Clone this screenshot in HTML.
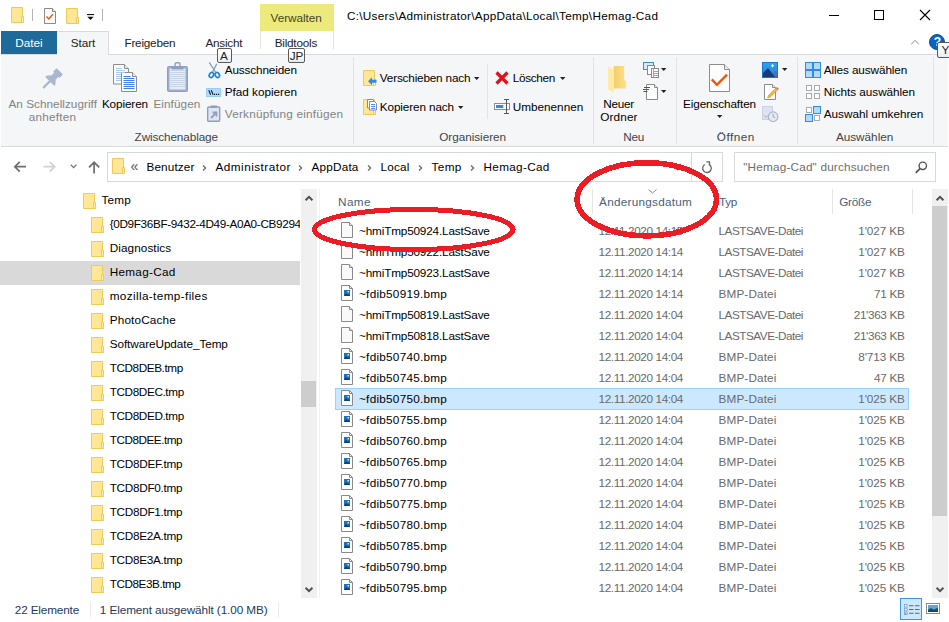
<!DOCTYPE html>
<html><head><meta charset="utf-8"><title>Hemag-Cad</title>
<style>
html,body{margin:0;padding:0;background:#fff;}
body{width:949px;height:622px;position:relative;overflow:hidden;font-family:"Liberation Sans",sans-serif;}
.t{position:absolute;white-space:nowrap;line-height:16px;font-size:12px;}
.r{position:absolute;display:block;}
</style></head><body>
<div class="r" style="left:0px;top:0px;width:949px;height:622px;background:#fff;"></div>
<div class="r" style="left:1px;top:55px;width:947px;height:92px;background:#f5f6f7;"></div>
<div class="r" style="left:1px;top:146px;width:947px;height:1px;background:#dadbdc;"></div>
<div class="r" style="left:1px;top:54px;width:947px;height:1px;background:#dadbdc;"></div>
<div class="r" style="left:260px;top:4px;width:74px;height:27px;background:#ecea7c;"></div>
<span class="t" style="left:270.50px;top:9.50px;font-size:11.75px;color:#45451f;letter-spacing:-0.025px;">Verwalten</span>
<div class="r" style="left:1px;top:31px;width:56px;height:23px;background:#1e6b9b;"></div>
<span class="t" style="left:15.30px;top:35.00px;font-size:11.75px;color:#fff;letter-spacing:-0.057px;">Datei</span>
<div class="r" style="left:57px;top:31px;width:52px;height:24px;background:#f5f6f7;border:1px solid #dadbdc;box-sizing:border-box;border-bottom:none;border-left:none;"></div>
<span class="t" style="left:70.80px;top:35.00px;font-size:11.75px;color:#222;letter-spacing:-0.078px;">Start</span>
<span class="t" style="left:124.43px;top:35.00px;font-size:11.75px;color:#222;letter-spacing:-0.220px;">Freigeben</span>
<span class="t" style="left:205.39px;top:35.00px;font-size:11.75px;color:#222;letter-spacing:-0.220px;">Ansicht</span>
<span class="t" style="left:274.67px;top:35.00px;font-size:11.75px;color:#222;letter-spacing:-0.220px;">Bildtools</span>
<div class="r" style="left:260px;top:31px;width:1px;height:18px;background:#e4e4dc;"></div>
<div class="r" style="left:333px;top:31px;width:1px;height:18px;background:#e4e4dc;"></div>
<span class="t" style="left:347.00px;top:8.00px;font-size:11.75px;color:#000;letter-spacing:0.276px;">C:\Users\Administrator\AppData\Local\Temp\Hemag-Cad</span>
<svg class="r" style="left:11px;top:7px" width="13" height="16" viewBox="0 0 13 16"><path d="M0.5 0.5h11v15H0.5z" fill="#ffe796" stroke="#f1c95a" stroke-width="1"/><path d="M10.5 9.5h2v6h-2z" fill="#ffefb8" stroke="#f1c95a" stroke-width="1"/></svg>
<div class="r" style="left:32px;top:9px;width:1px;height:12px;background:#b5b5b5;"></div>
<svg class="r" style="left:44px;top:8px" width="12" height="16" viewBox="0 0 12 16"><path d="M0.500 0.500h8l3 3v12h-11z" fill="#fafafa" stroke="#8a8a8a"/><path d="M8.500 0.500v3h3" fill="#eee" stroke="#8a8a8a"/><path d="M2.500 8.500l2.300 2.500 4-4.800" fill="none" stroke="#f0560a" stroke-width="1.400"/></svg>
<svg class="r" style="left:66px;top:8px" width="13" height="16" viewBox="0 0 13 16"><path d="M0.5 0.5h11v15H0.5z" fill="#ffe796" stroke="#f1c95a" stroke-width="1"/><path d="M10.5 9.5h2v6h-2z" fill="#ffefb8" stroke="#f1c95a" stroke-width="1"/></svg>
<svg class="r" style="left:87px;top:14px" width="8" height="7" viewBox="0 0 8 7"><rect x="0" y="0" width="7" height="1.100" fill="#111"/><path d="M0.300 2.800h6.400l-3.200 3.200z" fill="#111"/></svg>
<div class="r" style="left:102px;top:9px;width:1px;height:12px;background:#b5b5b5;"></div>
<div class="r" style="left:829px;top:15px;width:10px;height:1px;background:#000;"></div>
<div class="r" style="left:874px;top:10px;width:10px;height:10px;border:1px solid #000;box-sizing:border-box;"></div>
<svg class="r" style="left:919px;top:9px" width="12" height="12" viewBox="0 0 12 12"><path d="M1 1l10 10M11 1l-10 10" stroke="#000" stroke-width="1.1" fill="none"/></svg>
<svg class="r" style="left:910px;top:39px" width="11" height="7" viewBox="0 0 11 7"><path d="M1.200 5.300l3.800-4 3.800 4" stroke="#8a8a8a" stroke-width="1" fill="none"/></svg>
<div class="r" style="left:929px;top:33.8px;width:15.9px;height:15.9px;background:#0b64c2;border:1px solid #0a4f96;box-sizing:border-box;border-radius:8px;"></div>
<span class="t" style="left:933.66px;top:33.70px;font-size:12px;color:#fff;letter-spacing:0.000px;font-weight:bold;">?</span>
<div class="r" style="left:216.5px;top:48px;width:15px;height:15px;background:linear-gradient(#ffffff 30%,#e4ecf8);border:1px solid #5a5a5a;box-sizing:border-box;border-radius:2px;"></div>
<span class="t" style="left:220.08px;top:47.50px;font-size:11.75px;color:#222;letter-spacing:0.000px;">A</span>
<div class="r" style="left:288.3px;top:48px;width:16.5px;height:15px;background:linear-gradient(#ffffff 30%,#e4ecf8);border:1px solid #5a5a5a;box-sizing:border-box;border-radius:2px;"></div>
<span class="t" style="left:289.69px;top:47.50px;font-size:11.75px;color:#222;letter-spacing:0.000px;">JP</span>
<div class="r" style="left:937.3px;top:42.4px;width:16px;height:16.1px;background:linear-gradient(#ffffff 30%,#e4ecf8);border:1px solid #5a5a5a;box-sizing:border-box;border-radius:2px;"></div>
<span class="t" style="left:941.38px;top:42.45px;font-size:11.75px;color:#222;letter-spacing:0.000px;">Y</span>
<svg class="r" style="left:41px;top:66px" width="24" height="24" viewBox="0 0 24 24"><path d="M13.1 19.3 L14.0 18.5 L14.2 13.6 L17.2 10.6 L18.6 11.3 L21.4 8.5 L15.6 2.7 L12.8 5.5 L13.5 6.9 L10.5 9.9 L5.6 10.1 L4.8 11.0z" fill="#a9b8d0" stroke="#a9b8d0" stroke-linejoin="round" stroke-width="1.000"/><path d="M9 15.100l-6.300 6.300" stroke="#a9b8d0" stroke-width="2.200" stroke-linecap="round" fill="none"/></svg>
<span class="t" style="left:8.50px;top:95.60px;font-size:11.75px;color:#838383;letter-spacing:0.028px;">An Schnellzugriff</span>
<span class="t" style="left:28.80px;top:108.80px;font-size:11.75px;color:#838383;letter-spacing:0.209px;">anheften</span>
<svg class="r" style="left:113px;top:64px" width="24" height="28" viewBox="0 0 24 28"><g fill="#fff" stroke="#8c8c8c"><path d="M0.500 0.500h11l4 4v15.500h-15z"/><path d="M11.500 0.500v4h4" fill="#f0f0f0"/><path d="M8.500 8.500h11l4 4v15h-15z"/><path d="M19.500 8.500v4h4" fill="#f0f0f0"/></g><path d="M3 4.5h6M3 6.5h9M3 8.5h9M3 10.5h5M3 12.5h5M3 14.5h5M3 16.5h5" stroke="#a9c9f2" fill="none"/><path d="M10.5 12.5h7M10.5 14.5h11M10.5 16.5h11M10.5 18.5h11M10.5 20.5h11M10.5 22.5h11M10.5 24.5h11" stroke="#3b82e6" fill="none"/></svg>
<span class="t" style="left:101.90px;top:95.60px;font-size:11.75px;color:#000;letter-spacing:-0.119px;">Kopieren</span>
<svg class="r" style="left:167px;top:62px" width="21" height="30" viewBox="0 0 21 30"><rect x="0.500" y="4.500" width="20" height="25" rx="1" fill="#9dadc9" stroke="#8fa0bf"/><rect x="2.500" y="6.500" width="16" height="21" fill="#e6ecf6"/><path d="M3 8.5h15M3 10.5h15M3 12.5h15M3 14.5h15M3 16.5h15M3 18.5h15M3 20.5h15M3 22.5h15M3 24.5h15" stroke="#c9d4e8" fill="none"/><path d="M4.500 7.500v-2l2-1.500h8l2 1.500v2z" fill="#8fa0bf"/><rect x="8" y="0.800" width="5" height="4" rx="1.500" fill="none" stroke="#8fa0bf" stroke-width="1.400"/></svg>
<span class="t" style="left:153.40px;top:95.60px;font-size:11.75px;color:#838383;letter-spacing:0.074px;">Einfügen</span>
<svg class="r" style="left:207px;top:61px" width="15" height="18" viewBox="0 0 15 18"><path d="M2.200 1.400l6.300 9.600M9.800 2.800l-4.200 8.200" stroke="#8d99ab" stroke-width="1.300" fill="none"/><ellipse cx="4.400" cy="14" rx="2" ry="2.700" transform="rotate(30 4.400 14)" fill="none" stroke="#1e88d8" stroke-width="1.700"/><ellipse cx="10.300" cy="14" rx="2" ry="2.700" transform="rotate(-30 10.300 14)" fill="none" stroke="#1e88d8" stroke-width="1.700"/></svg>
<span class="t" style="left:224.80px;top:62.00px;font-size:11.75px;color:#000;letter-spacing:-0.147px;">Ausschneiden</span>
<svg class="r" style="left:206px;top:88px" width="15" height="9" viewBox="0 0 15 9"><rect x="0.500" y="0.500" width="14" height="8" fill="#b4dafb" stroke="#9accf8"/><path d="M2.800 2.200l1.800 4.600M5.300 2.200l1.800 4.600" stroke="#1a1a2a" stroke-width="1.100"/><path d="M8 6.300h1.200M10 6.300h1.200M12 6.300h1.200" stroke="#1a1a2a" stroke-width="1.200"/></svg>
<span class="t" style="left:224.80px;top:84.00px;font-size:11.75px;color:#000;letter-spacing:-0.025px;">Pfad kopieren</span>
<svg class="r" style="left:207px;top:105px" width="14" height="17" viewBox="0 0 14 17"><rect x="0.700" y="2" width="12" height="14.300" rx="1" fill="#dfe6f2" stroke="#8fa0bf" stroke-width="1.400"/><rect x="3.500" y="0.500" width="6.500" height="2.500" fill="#8fa0bf"/><path d="M4 13l4.500-4.500M5.500 7.500h4v4" stroke="#8fa0bf" stroke-width="1.800" fill="none"/></svg>
<span class="t" style="left:224.80px;top:106.00px;font-size:11.75px;color:#838383;letter-spacing:0.209px;">Verknüpfung einfügen</span>
<span class="t" style="left:134.60px;top:129.00px;font-size:11.75px;color:#444;letter-spacing:-0.116px;">Zwischenablage</span>
<div class="r" style="left:353px;top:57px;width:1px;height:87px;background:#e2e3e4;"></div>
<svg class="r" style="left:363px;top:70px" width="13" height="16" viewBox="0 0 13 16"><path d="M0.5 0.5h11v15H0.5z" fill="#ffe796" stroke="#f1c95a" stroke-width="1"/><path d="M10.5 9.5h2v6h-2z" fill="#ffefb8" stroke="#f1c95a" stroke-width="1"/></svg>
<svg class="r" style="left:367px;top:77px" width="10" height="8" viewBox="0 0 10 8"><path d="M9.500 2.700h-4.500v-2.400l-4 3.900 4 3.900v-2.400h4.500z" fill="#2f8be6"/></svg>
<span class="t" style="left:379.80px;top:70.00px;font-size:11.75px;color:#000;letter-spacing:-0.181px;">Verschieben nach</span>
<svg class="r" style="left:473.5px;top:76.5px" width="6" height="4" viewBox="0 0 6 4"><path d="M0 0h5.400l-2.700 3z" fill="#222"/></svg>
<svg class="r" style="left:363px;top:99px" width="13" height="16" viewBox="0 0 13 16"><path d="M0.5 0.5h11v15H0.5z" fill="#ffe796" stroke="#f1c95a" stroke-width="1"/><path d="M10.5 9.5h2v6h-2z" fill="#ffefb8" stroke="#f1c95a" stroke-width="1"/></svg>
<svg class="r" style="left:367px;top:99px" width="11" height="12" viewBox="0 0 11 12"><path d="M0.500 0.500h5l2 2v6.500h-7z" fill="#fff" stroke="#8c8c8c"/><path d="M2.500 2.500h5l2 2v6.500h-7z" fill="#fff" stroke="#8c8c8c"/><path d="M4 5.500h4M4 7.500h4M4 9.500h4" stroke="#4a8ff0"/></svg>
<span class="t" style="left:379.80px;top:99.00px;font-size:11.75px;color:#000;letter-spacing:-0.123px;">Kopieren nach</span>
<svg class="r" style="left:457.7px;top:105.5px" width="6" height="4" viewBox="0 0 6 4"><path d="M0 0h5.400l-2.700 3z" fill="#222"/></svg>
<svg class="r" style="left:495px;top:71px" width="14" height="14" viewBox="0 0 14 14"><path d="M1.500 1.500l11 11M12.500 1.500l-11 11" stroke="#e0101c" stroke-width="3.200" fill="none"/></svg>
<span class="t" style="left:512.80px;top:70.00px;font-size:11.75px;color:#000;letter-spacing:-0.320px;">Löschen</span>
<svg class="r" style="left:559.7px;top:76.5px" width="6" height="4" viewBox="0 0 6 4"><path d="M0 0h5.400l-2.700 3z" fill="#222"/></svg>
<svg class="r" style="left:494px;top:99px" width="16" height="15" viewBox="0 0 16 15"><rect x="0.500" y="4.500" width="15" height="6" fill="#fff" stroke="#8c8c8c"/><rect x="2" y="6" width="7.300" height="3" fill="#2f8be6"/><path d="M12.500 0.500v14M10 0.500h5M10 14.500h5" stroke="#555" fill="none"/></svg>
<span class="t" style="left:512.80px;top:99.00px;font-size:11.75px;color:#000;letter-spacing:-0.016px;">Umbenennen</span>
<span class="t" style="left:439.20px;top:129.00px;font-size:11.75px;color:#444;letter-spacing:-0.033px;">Organisieren</span>
<div class="r" style="left:487px;top:64px;width:1px;height:55px;background:#e2e3e4;"></div>
<div class="r" style="left:593px;top:57px;width:1px;height:87px;background:#e2e3e4;"></div>
<svg class="r" style="left:607px;top:64px" width="21" height="30" viewBox="0 0 21 30"><defs><linearGradient id="nf" x1="0" x2="1"><stop offset="0" stop-color="#f3cf6a"/><stop offset="1" stop-color="#ffe08a"/></linearGradient></defs><path d="M6.600 2h10.600v14l1.900 1.200v7.300h-12.500z" fill="url(#nf)"/><path d="M1.100 2.200l5.500 4.300v22.200l-5.500-3.400z" fill="#ffe9a6"/></svg>
<span class="t" style="left:603.30px;top:95.70px;font-size:11.75px;color:#000;letter-spacing:-0.275px;">Neuer</span>
<span class="t" style="left:600.20px;top:108.70px;font-size:11.75px;color:#000;letter-spacing:0.147px;">Ordner</span>
<svg class="r" style="left:643px;top:62px" width="16" height="16" viewBox="0 0 16 16"><rect x="0.500" y="0.500" width="10" height="7" fill="#d6ebf7" stroke="#3a8fc8"/><rect x="4.500" y="3.500" width="7" height="9" fill="#fff" stroke="#8a8a8a"/><rect x="8.500" y="6.500" width="7" height="9" fill="#fff" stroke="#8a8a8a"/><path d="M11 9.500h4M11 11.500h4M11 13.500h4" stroke="#7aaee8"/><path d="M10.500 7v8" stroke="#e88"/></svg>
<svg class="r" style="left:661px;top:68.2px" width="6" height="4" viewBox="0 0 6 4"><path d="M0 0h5.400l-2.700 3z" fill="#222"/></svg>
<svg class="r" style="left:643px;top:84px" width="16" height="16" viewBox="0 0 16 16"><path d="M3.500 0.500h8l3 3v12h-11z" fill="#fff" stroke="#8a8a8a"/><path d="M11.500 0.500v3h3" fill="#eee" stroke="#8a8a8a"/><path d="M1 3.500h6M0 5.500h6M0.500 7.500h4" stroke="#1e63b0" stroke-width="1"/></svg>
<svg class="r" style="left:661px;top:89.7px" width="6" height="4" viewBox="0 0 6 4"><path d="M0 0h5.400l-2.700 3z" fill="#222"/></svg>
<span class="t" style="left:623.20px;top:128.50px;font-size:11.75px;color:#444;letter-spacing:-0.177px;">Neu</span>
<div class="r" style="left:676px;top:57px;width:1px;height:87px;background:#e2e3e4;"></div>
<svg class="r" style="left:709px;top:64px" width="21" height="28" viewBox="0 0 21 28"><path d="M0.500 0.500h15l5 5v22h-20z" fill="#fdfdfd" stroke="#8c8c8c"/><path d="M15.500 0.500v5h5" fill="#ededed" stroke="#8c8c8c"/><path d="M2.800 15.400l5.100 5.400 10.100-10.200" stroke="#f0560a" stroke-width="2.400" fill="none"/></svg>
<span class="t" style="left:683.00px;top:95.70px;font-size:11.75px;color:#000;letter-spacing:-0.114px;">Eigenschaften</span>
<svg class="r" style="left:716.7px;top:115px" width="6" height="4" viewBox="0 0 6 4"><path d="M0 0h5.400l-2.700 3z" fill="#222"/></svg>
<svg class="r" style="left:762px;top:62px" width="16" height="16" viewBox="0 0 16 16"><defs><linearGradient id="sk" x1="0" x2="0" y1="0" y2="1"><stop offset="0" stop-color="#2aa4ee"/><stop offset="1" stop-color="#2a7fd8"/></linearGradient></defs><rect x="0.500" y="0.500" width="15" height="15" fill="url(#sk)" stroke="#1a74d4"/><path d="M9 15l4-6.500 2 2.500v4z" fill="#4a6cc8"/><path d="M1 15v-4l5-5 7 9z" fill="#173a7c"/><path d="M10.500 2.300v3M9 3.800h3" stroke="#fff" stroke-width="1.100"/></svg>
<svg class="r" style="left:782px;top:68.2px" width="6" height="4" viewBox="0 0 6 4"><path d="M0 0h5.400l-2.700 3z" fill="#222"/></svg>
<svg class="r" style="left:762px;top:84px" width="17" height="16" viewBox="0 0 17 16"><path d="M2.500 0.500h8l3 3v12h-11z" fill="#fff" stroke="#8c8c8c"/><path d="M10.500 0.500v3h3" fill="#eee" stroke="#8c8c8c"/><path d="M5.500 14l1-2.800 7.500-7.200 1.800 1.800-7.500 7.200z" fill="#f3b53c" stroke="#c98a1a" stroke-width="0.500"/><path d="M14 4l1-1 1.800 1.800-1 1z" fill="#e85a6a"/></svg>
<svg class="r" style="left:762px;top:106px" width="17" height="17" viewBox="0 0 17 17"><rect x="0.500" y="0.500" width="10" height="13" fill="#dde3f0" stroke="#c9d2e4"/><circle cx="11.100" cy="10.700" r="4.800" fill="#e4e9f3" stroke="#aab6cf" stroke-width="1.200"/><path d="M11.100 8v2.700l2 1" stroke="#96a4c0" fill="none"/><path d="M2 9l2 2.500 1.500-2" stroke="#aab6cf" fill="none"/></svg>
<span class="t" style="left:716.80px;top:128.50px;font-size:11.75px;color:#444;letter-spacing:0.508px;">Öffnen</span>
<div class="r" style="left:797px;top:57px;width:1px;height:87px;background:#e2e3e4;"></div>
<svg class="r" style="left:805px;top:62px" width="16" height="16" viewBox="0 0 16 16"><rect x="0.5" y="0.5" width="7" height="7" fill="#b4dafb" stroke="#2f8be6"/><rect x="8.5" y="0.5" width="7" height="7" fill="#b4dafb" stroke="#2f8be6"/><rect x="0.5" y="8.5" width="7" height="7" fill="#b4dafb" stroke="#2f8be6"/><rect x="8.5" y="8.5" width="7" height="7" fill="#b4dafb" stroke="#2f8be6"/></svg>
<span class="t" style="left:823.80px;top:62.00px;font-size:11.75px;color:#000;letter-spacing:-0.101px;">Alles auswählen</span>
<svg class="r" style="left:805px;top:84px" width="16" height="16" viewBox="0 0 16 16"><rect x="1.5" y="1.5" width="5" height="5" fill="#fff" stroke="#ababab"/><rect x="9.5" y="1.5" width="5" height="5" fill="#fff" stroke="#ababab"/><rect x="1.5" y="9.5" width="5" height="5" fill="#fff" stroke="#ababab"/><rect x="9.5" y="9.5" width="5" height="5" fill="#fff" stroke="#ababab"/></svg>
<span class="t" style="left:823.80px;top:83.70px;font-size:11.75px;color:#000;letter-spacing:-0.052px;">Nichts auswählen</span>
<svg class="r" style="left:805px;top:106px" width="16" height="16" viewBox="0 0 16 16"><rect x="1.5" y="1.5" width="5" height="5" fill="#fff" stroke="#ababab"/><rect x="8.5" y="0.5" width="7" height="7" fill="#b4dafb" stroke="#2f8be6"/><rect x="0.5" y="8.5" width="7" height="7" fill="#b4dafb" stroke="#2f8be6"/><rect x="9.5" y="9.5" width="5" height="5" fill="#fff" stroke="#ababab"/></svg>
<span class="t" style="left:823.80px;top:105.80px;font-size:11.75px;color:#000;letter-spacing:-0.022px;">Auswahl umkehren</span>
<span class="t" style="left:835.90px;top:129.00px;font-size:11.75px;color:#444;letter-spacing:-0.010px;">Auswählen</span>
<div class="r" style="left:933px;top:57px;width:1px;height:87px;background:#e2e3e4;"></div>
<svg class="r" style="left:13px;top:161px" width="14" height="12" viewBox="0 0 14 12"><path d="M13 5.700h-11M6.700 0.800l-4.900 4.900 4.900 4.900" stroke="#6e6e6e" stroke-width="1.700" fill="none"/></svg>
<svg class="r" style="left:43px;top:161px" width="14" height="12" viewBox="0 0 14 12"><path d="M0.500 5.700h11M6.800 0.800l4.900 4.900-4.900 4.900" stroke="#d2d2d2" stroke-width="1.700" fill="none"/></svg>
<svg class="r" style="left:70px;top:164px" width="8" height="5" viewBox="0 0 8 5"><path d="M0.800 0.800l2.800 2.800 2.800-2.800" stroke="#777" stroke-width="1.300" fill="none"/></svg>
<svg class="r" style="left:88px;top:161px" width="12" height="13" viewBox="0 0 12 13"><path d="M6.100 12.600v-11M1 6.400l5.100-5.100 5.100 5.100" stroke="#6e6e6e" stroke-width="1.700" fill="none"/></svg>
<div class="r" style="left:107px;top:152px;width:616px;height:29.5px;background:#fff;border:1px solid #d9d9d9;box-sizing:border-box;"></div>
<div class="r" style="left:691px;top:153px;width:1px;height:28px;background:#d9d9d9;"></div>
<svg class="r" style="left:112px;top:158px" width="13" height="16" viewBox="0 0 13 16"><path d="M0.5 0.5h11v15H0.5z" fill="#ffe796" stroke="#f1c95a" stroke-width="1"/><path d="M10.5 9.5h2v6h-2z" fill="#ffefb8" stroke="#f1c95a" stroke-width="1"/></svg>
<span class="t" style="left:130.50px;top:158.20px;font-size:14px;color:#555;letter-spacing:0.000px;">«</span>
<span class="t" style="left:146.50px;top:159.00px;font-size:11.75px;color:#000;letter-spacing:0.125px;">Benutzer</span>
<span class="t" style="left:215.50px;top:159.00px;font-size:11.75px;color:#000;letter-spacing:0.474px;">Administrator</span>
<span class="t" style="left:311.50px;top:159.00px;font-size:11.75px;color:#000;letter-spacing:0.196px;">AppData</span>
<span class="t" style="left:380.50px;top:159.00px;font-size:11.75px;color:#000;letter-spacing:0.203px;">Local</span>
<span class="t" style="left:431.50px;top:159.00px;font-size:11.75px;color:#000;letter-spacing:0.390px;">Temp</span>
<span class="t" style="left:483.50px;top:159.00px;font-size:11.75px;color:#000;letter-spacing:0.320px;">Hemag-Cad</span>
<svg class="r" style="left:202px;top:164px" width="5" height="8" viewBox="0 0 5 8"><path d="M1 1.500l2.600 2.500-2.600 2.500" stroke="#6a6a6a" stroke-width="1.300" fill="none"/></svg>
<svg class="r" style="left:298px;top:164px" width="5" height="8" viewBox="0 0 5 8"><path d="M1 1.500l2.600 2.500-2.600 2.500" stroke="#6a6a6a" stroke-width="1.300" fill="none"/></svg>
<svg class="r" style="left:367px;top:164px" width="5" height="8" viewBox="0 0 5 8"><path d="M1 1.500l2.600 2.500-2.600 2.500" stroke="#6a6a6a" stroke-width="1.300" fill="none"/></svg>
<svg class="r" style="left:418px;top:164px" width="5" height="8" viewBox="0 0 5 8"><path d="M1 1.500l2.600 2.500-2.600 2.500" stroke="#6a6a6a" stroke-width="1.300" fill="none"/></svg>
<svg class="r" style="left:470px;top:164px" width="5" height="8" viewBox="0 0 5 8"><path d="M1 1.500l2.600 2.500-2.600 2.500" stroke="#6a6a6a" stroke-width="1.300" fill="none"/></svg>
<svg class="r" style="left:673px;top:165px" width="9" height="6" viewBox="0 0 9 6"><path d="M1 1l3.500 3.500 3.500-3.500" stroke="#444" stroke-width="1.400" fill="none"/></svg>
<svg class="r" style="left:701px;top:161px" width="12" height="13" viewBox="0 0 12 13"><path d="M7.800 3.300a4.300 4.300 0 1 1-4 0.200" stroke="#666" stroke-width="1.300" fill="none"/><path d="M5.300 0.800h3.200v3.200" stroke="#666" stroke-width="1.300" fill="none"/></svg>
<div class="r" style="left:734px;top:152px;width:202px;height:29.5px;background:#fff;border:1px solid #d9d9d9;box-sizing:border-box;"></div>
<span class="t" style="left:743.20px;top:159.30px;font-size:11.75px;color:#6d6d6d;letter-spacing:0.190px;">"Hemag-Cad" durchsuchen</span>
<svg class="r" style="left:915px;top:161px" width="13" height="13" viewBox="0 0 13 13"><circle cx="7.800" cy="4.800" r="3.700" stroke="#555" stroke-width="1.400" fill="none"/><path d="M5.200 7.400l-4.400 4.400" stroke="#555" stroke-width="1.800"/></svg>
<div class="r" style="left:0px;top:261px;width:300px;height:24px;background:#d9d9d9;"></div>
<svg class="r" style="left:83px;top:193px" width="13" height="16" viewBox="0 0 13 16"><path d="M0.5 0.5h11v15H0.5z" fill="#ffe796" stroke="#f1c95a" stroke-width="1"/><path d="M10.5 9.5h2v6h-2z" fill="#ffefb8" stroke="#f1c95a" stroke-width="1"/></svg>
<span class="t" style="left:101.50px;top:192.20px;font-size:11.75px;color:#000;letter-spacing:0.156px;">Temp</span>
<svg class="r" style="left:91px;top:217px" width="13" height="16" viewBox="0 0 13 16"><path d="M0.5 0.5h11v15H0.5z" fill="#ffe796" stroke="#f1c95a" stroke-width="1"/><path d="M10.5 9.5h2v6h-2z" fill="#ffefb8" stroke="#f1c95a" stroke-width="1"/></svg>
<span class="t" style="left:109.70px;top:216.20px;font-size:11.75px;color:#000;letter-spacing:-0.347px;">{0D9F36BF-9432-4D49-A0A0-CB9294</span>
<svg class="r" style="left:91px;top:241px" width="13" height="16" viewBox="0 0 13 16"><path d="M0.5 0.5h11v15H0.5z" fill="#ffe796" stroke="#f1c95a" stroke-width="1"/><path d="M10.5 9.5h2v6h-2z" fill="#ffefb8" stroke="#f1c95a" stroke-width="1"/></svg>
<span class="t" style="left:109.70px;top:240.20px;font-size:11.75px;color:#000;letter-spacing:0.077px;">Diagnostics</span>
<svg class="r" style="left:91px;top:265px" width="13" height="16" viewBox="0 0 13 16"><path d="M0.5 0.5h11v15H0.5z" fill="#ffe796" stroke="#f1c95a" stroke-width="1"/><path d="M10.5 9.5h2v6h-2z" fill="#ffefb8" stroke="#f1c95a" stroke-width="1"/></svg>
<span class="t" style="left:109.70px;top:264.20px;font-size:11.75px;color:#000;letter-spacing:0.282px;">Hemag-Cad</span>
<svg class="r" style="left:91px;top:289px" width="13" height="16" viewBox="0 0 13 16"><path d="M0.5 0.5h11v15H0.5z" fill="#ffe796" stroke="#f1c95a" stroke-width="1"/><path d="M10.5 9.5h2v6h-2z" fill="#ffefb8" stroke="#f1c95a" stroke-width="1"/></svg>
<span class="t" style="left:109.70px;top:288.20px;font-size:11.75px;color:#000;letter-spacing:0.370px;">mozilla-temp-files</span>
<svg class="r" style="left:91px;top:313px" width="13" height="16" viewBox="0 0 13 16"><path d="M0.5 0.5h11v15H0.5z" fill="#ffe796" stroke="#f1c95a" stroke-width="1"/><path d="M10.5 9.5h2v6h-2z" fill="#ffefb8" stroke="#f1c95a" stroke-width="1"/></svg>
<span class="t" style="left:109.70px;top:312.20px;font-size:11.75px;color:#000;letter-spacing:0.159px;">PhotoCache</span>
<svg class="r" style="left:91px;top:337px" width="13" height="16" viewBox="0 0 13 16"><path d="M0.5 0.5h11v15H0.5z" fill="#ffe796" stroke="#f1c95a" stroke-width="1"/><path d="M10.5 9.5h2v6h-2z" fill="#ffefb8" stroke="#f1c95a" stroke-width="1"/></svg>
<span class="t" style="left:109.70px;top:336.20px;font-size:11.75px;color:#000;letter-spacing:-0.073px;">SoftwareUpdate_Temp</span>
<svg class="r" style="left:91px;top:361px" width="13" height="16" viewBox="0 0 13 16"><path d="M0.5 0.5h11v15H0.5z" fill="#ffe796" stroke="#f1c95a" stroke-width="1"/><path d="M10.5 9.5h2v6h-2z" fill="#ffefb8" stroke="#f1c95a" stroke-width="1"/></svg>
<span class="t" style="left:109.70px;top:360.20px;font-size:11.75px;color:#000;letter-spacing:-0.420px;">TCD8DEB.tmp</span>
<svg class="r" style="left:91px;top:385px" width="13" height="16" viewBox="0 0 13 16"><path d="M0.5 0.5h11v15H0.5z" fill="#ffe796" stroke="#f1c95a" stroke-width="1"/><path d="M10.5 9.5h2v6h-2z" fill="#ffefb8" stroke="#f1c95a" stroke-width="1"/></svg>
<span class="t" style="left:109.70px;top:384.20px;font-size:11.75px;color:#000;letter-spacing:-0.384px;">TCD8DEC.tmp</span>
<svg class="r" style="left:91px;top:409px" width="13" height="16" viewBox="0 0 13 16"><path d="M0.5 0.5h11v15H0.5z" fill="#ffe796" stroke="#f1c95a" stroke-width="1"/><path d="M10.5 9.5h2v6h-2z" fill="#ffefb8" stroke="#f1c95a" stroke-width="1"/></svg>
<span class="t" style="left:109.70px;top:408.20px;font-size:11.75px;color:#000;letter-spacing:-0.384px;">TCD8DED.tmp</span>
<svg class="r" style="left:91px;top:433px" width="13" height="16" viewBox="0 0 13 16"><path d="M0.5 0.5h11v15H0.5z" fill="#ffe796" stroke="#f1c95a" stroke-width="1"/><path d="M10.5 9.5h2v6h-2z" fill="#ffefb8" stroke="#f1c95a" stroke-width="1"/></svg>
<span class="t" style="left:109.70px;top:432.20px;font-size:11.75px;color:#000;letter-spacing:-0.480px;">TCD8DEE.tmp</span>
<svg class="r" style="left:91px;top:457px" width="13" height="16" viewBox="0 0 13 16"><path d="M0.5 0.5h11v15H0.5z" fill="#ffe796" stroke="#f1c95a" stroke-width="1"/><path d="M10.5 9.5h2v6h-2z" fill="#ffefb8" stroke="#f1c95a" stroke-width="1"/></svg>
<span class="t" style="left:109.70px;top:456.20px;font-size:11.75px;color:#000;letter-spacing:-0.283px;">TCD8DEF.tmp</span>
<svg class="r" style="left:91px;top:481px" width="13" height="16" viewBox="0 0 13 16"><path d="M0.5 0.5h11v15H0.5z" fill="#ffe796" stroke="#f1c95a" stroke-width="1"/><path d="M10.5 9.5h2v6h-2z" fill="#ffefb8" stroke="#f1c95a" stroke-width="1"/></svg>
<span class="t" style="left:109.70px;top:480.20px;font-size:11.75px;color:#000;letter-spacing:-0.283px;">TCD8DF0.tmp</span>
<svg class="r" style="left:91px;top:505px" width="13" height="16" viewBox="0 0 13 16"><path d="M0.5 0.5h11v15H0.5z" fill="#ffe796" stroke="#f1c95a" stroke-width="1"/><path d="M10.5 9.5h2v6h-2z" fill="#ffefb8" stroke="#f1c95a" stroke-width="1"/></svg>
<span class="t" style="left:109.70px;top:504.20px;font-size:11.75px;color:#000;letter-spacing:-0.283px;">TCD8DF1.tmp</span>
<svg class="r" style="left:91px;top:529px" width="13" height="16" viewBox="0 0 13 16"><path d="M0.5 0.5h11v15H0.5z" fill="#ffe796" stroke="#f1c95a" stroke-width="1"/><path d="M10.5 9.5h2v6h-2z" fill="#ffefb8" stroke="#f1c95a" stroke-width="1"/></svg>
<span class="t" style="left:109.70px;top:528.20px;font-size:11.75px;color:#000;letter-spacing:-0.284px;">TCD8E2A.tmp</span>
<svg class="r" style="left:91px;top:553px" width="13" height="16" viewBox="0 0 13 16"><path d="M0.5 0.5h11v15H0.5z" fill="#ffe796" stroke="#f1c95a" stroke-width="1"/><path d="M10.5 9.5h2v6h-2z" fill="#ffefb8" stroke="#f1c95a" stroke-width="1"/></svg>
<span class="t" style="left:109.70px;top:552.20px;font-size:11.75px;color:#000;letter-spacing:-0.284px;">TCD8E3A.tmp</span>
<svg class="r" style="left:91px;top:577px" width="13" height="16" viewBox="0 0 13 16"><path d="M0.5 0.5h11v15H0.5z" fill="#ffe796" stroke="#f1c95a" stroke-width="1"/><path d="M10.5 9.5h2v6h-2z" fill="#ffefb8" stroke="#f1c95a" stroke-width="1"/></svg>
<span class="t" style="left:109.70px;top:576.20px;font-size:11.75px;color:#000;letter-spacing:-0.454px;">TCD8E3B.tmp</span>
<div class="r" style="left:300px;top:188px;width:20px;height:410px;background:#fff;"></div>
<div class="r" style="left:301px;top:189px;width:16px;height:409px;background:#f0f0f0;"></div>
<svg class="r" style="left:304px;top:194px" width="10" height="8" viewBox="0 0 10 8"><path d="M1.600 6.300l3.400-3.400 3.400 3.400" stroke="#505050" stroke-width="2" fill="none"/></svg>
<svg class="r" style="left:304px;top:586px" width="10" height="8" viewBox="0 0 10 8"><path d="M1.600 1.700l3.400 3.400 3.400-3.400" stroke="#505050" stroke-width="2" fill="none"/></svg>
<div class="r" style="left:301px;top:381px;width:15px;height:25.5px;background:#cdcdcd;"></div>
<div class="r" style="left:319px;top:189px;width:1px;height:409px;background:#f2f2f2;"></div>
<span class="t" style="left:338.10px;top:194.00px;font-size:11.75px;color:#4c607a;letter-spacing:0.353px;">Name</span>
<span class="t" style="left:599.10px;top:194.00px;font-size:11.75px;color:#4c607a;letter-spacing:0.247px;">Änderungsdatum</span>
<span class="t" style="left:719.00px;top:194.00px;font-size:11.75px;color:#4c607a;letter-spacing:-0.270px;">Typ</span>
<span class="t" style="left:839.20px;top:194.00px;font-size:11.75px;color:#4c607a;letter-spacing:-0.225px;">Größe</span>
<div class="r" style="left:592px;top:189px;width:1px;height:25px;background:#e5e5e5;"></div>
<div class="r" style="left:713px;top:189px;width:1px;height:25px;background:#e5e5e5;"></div>
<div class="r" style="left:832px;top:189px;width:1px;height:25px;background:#e5e5e5;"></div>
<div class="r" style="left:912px;top:189px;width:1px;height:25px;background:#e5e5e5;"></div>
<svg class="r" style="left:648px;top:189px" width="9" height="5" viewBox="0 0 9 5"><path d="M0.500 0.500l4 3.500 4-3.500" stroke="#8a8a8a" stroke-width="1" fill="none"/></svg>
<div class="r" style="left:335px;top:388px;width:574px;height:22px;background:#cce8ff;border:1px solid #99d1ff;box-sizing:border-box;"></div>
<svg class="r" style="left:341px;top:222px" width="12" height="16" viewBox="0 0 12 16"><path d="M0.5 0.5h8l3 3v12h-11z" fill="#f9f9f9" stroke="#8a8a8a"/><path d="M8.5 0.5v3h3" fill="#ececec" stroke="#8a8a8a"/></svg>
<span class="t" style="left:359.00px;top:223.00px;font-size:11.75px;color:#000;letter-spacing:-0.166px;">~hmiTmp50924.LastSave</span>
<span class="t" style="left:598.50px;top:223.00px;font-size:11.75px;color:#6a6a6a;letter-spacing:-0.380px;">12.11.2020 14:15</span>
<span class="t" style="left:718.50px;top:223.00px;font-size:11.75px;color:#6a6a6a;letter-spacing:-0.485px;">LASTSAVE-Datei</span>
<span class="t" style="left:858.30px;top:223.00px;font-size:11.75px;color:#6a6a6a;letter-spacing:-0.117px;">1'027 KB</span>
<svg class="r" style="left:341px;top:243px" width="12" height="16" viewBox="0 0 12 16"><path d="M0.5 0.5h8l3 3v12h-11z" fill="#f9f9f9" stroke="#8a8a8a"/><path d="M8.5 0.5v3h3" fill="#ececec" stroke="#8a8a8a"/></svg>
<span class="t" style="left:359.00px;top:244.00px;font-size:11.75px;color:#000;letter-spacing:-0.166px;">~hmiTmp50922.LastSave</span>
<span class="t" style="left:598.50px;top:244.00px;font-size:11.75px;color:#6a6a6a;letter-spacing:-0.380px;">12.11.2020 14:14</span>
<span class="t" style="left:718.50px;top:244.00px;font-size:11.75px;color:#6a6a6a;letter-spacing:-0.485px;">LASTSAVE-Datei</span>
<span class="t" style="left:858.30px;top:244.00px;font-size:11.75px;color:#6a6a6a;letter-spacing:-0.117px;">1'027 KB</span>
<svg class="r" style="left:341px;top:264px" width="12" height="16" viewBox="0 0 12 16"><path d="M0.5 0.5h8l3 3v12h-11z" fill="#f9f9f9" stroke="#8a8a8a"/><path d="M8.5 0.5v3h3" fill="#ececec" stroke="#8a8a8a"/></svg>
<span class="t" style="left:359.00px;top:265.00px;font-size:11.75px;color:#000;letter-spacing:-0.166px;">~hmiTmp50923.LastSave</span>
<span class="t" style="left:598.50px;top:265.00px;font-size:11.75px;color:#6a6a6a;letter-spacing:-0.380px;">12.11.2020 14:14</span>
<span class="t" style="left:718.50px;top:265.00px;font-size:11.75px;color:#6a6a6a;letter-spacing:-0.485px;">LASTSAVE-Datei</span>
<span class="t" style="left:858.30px;top:265.00px;font-size:11.75px;color:#6a6a6a;letter-spacing:-0.117px;">1'027 KB</span>
<svg class="r" style="left:341px;top:285px" width="12" height="16" viewBox="0 0 12 16"><path d="M0.5 0.5h8l3 3v12h-11z" fill="#fff" stroke="#8a8a8a"/><path d="M8.5 0.5v3h3" fill="none" stroke="#8a8a8a"/><rect x="3" y="5" width="6" height="6" fill="#1e73be"/><path d="M3 11l2-3 2 2 1-1 1 2z" fill="#0b3f7a"/><rect x="6.5" y="6" width="1.5" height="1.5" fill="#cfe6fb"/></svg>
<span class="t" style="left:359.00px;top:286.00px;font-size:11.75px;color:#000;letter-spacing:0.254px;">~fdib50919.bmp</span>
<span class="t" style="left:598.50px;top:286.00px;font-size:11.75px;color:#6a6a6a;letter-spacing:-0.380px;">12.11.2020 14:14</span>
<span class="t" style="left:718.50px;top:286.00px;font-size:11.75px;color:#6a6a6a;letter-spacing:0.137px;">BMP-Datei</span>
<span class="t" style="left:874.00px;top:286.00px;font-size:11.75px;color:#6a6a6a;letter-spacing:-0.302px;">71 KB</span>
<svg class="r" style="left:341px;top:306px" width="12" height="16" viewBox="0 0 12 16"><path d="M0.5 0.5h8l3 3v12h-11z" fill="#f9f9f9" stroke="#8a8a8a"/><path d="M8.5 0.5v3h3" fill="#ececec" stroke="#8a8a8a"/></svg>
<span class="t" style="left:359.00px;top:307.00px;font-size:11.75px;color:#000;letter-spacing:-0.166px;">~hmiTmp50819.LastSave</span>
<span class="t" style="left:598.50px;top:307.00px;font-size:11.75px;color:#6a6a6a;letter-spacing:-0.380px;">12.11.2020 14:04</span>
<span class="t" style="left:718.50px;top:307.00px;font-size:11.75px;color:#6a6a6a;letter-spacing:-0.485px;">LASTSAVE-Datei</span>
<span class="t" style="left:853.70px;top:307.00px;font-size:11.75px;color:#6a6a6a;letter-spacing:-0.344px;">21'363 KB</span>
<svg class="r" style="left:341px;top:327px" width="12" height="16" viewBox="0 0 12 16"><path d="M0.5 0.5h8l3 3v12h-11z" fill="#f9f9f9" stroke="#8a8a8a"/><path d="M8.5 0.5v3h3" fill="#ececec" stroke="#8a8a8a"/></svg>
<span class="t" style="left:359.00px;top:328.00px;font-size:11.75px;color:#000;letter-spacing:-0.166px;">~hmiTmp50818.LastSave</span>
<span class="t" style="left:598.50px;top:328.00px;font-size:11.75px;color:#6a6a6a;letter-spacing:-0.380px;">12.11.2020 14:04</span>
<span class="t" style="left:718.50px;top:328.00px;font-size:11.75px;color:#6a6a6a;letter-spacing:-0.485px;">LASTSAVE-Datei</span>
<span class="t" style="left:853.70px;top:328.00px;font-size:11.75px;color:#6a6a6a;letter-spacing:-0.344px;">21'363 KB</span>
<svg class="r" style="left:341px;top:348px" width="12" height="16" viewBox="0 0 12 16"><path d="M0.5 0.5h8l3 3v12h-11z" fill="#fff" stroke="#8a8a8a"/><path d="M8.5 0.5v3h3" fill="none" stroke="#8a8a8a"/><rect x="3" y="5" width="6" height="6" fill="#1e73be"/><path d="M3 11l2-3 2 2 1-1 1 2z" fill="#0b3f7a"/><rect x="6.5" y="6" width="1.5" height="1.5" fill="#cfe6fb"/></svg>
<span class="t" style="left:359.00px;top:349.00px;font-size:11.75px;color:#000;letter-spacing:0.254px;">~fdib50740.bmp</span>
<span class="t" style="left:598.50px;top:349.00px;font-size:11.75px;color:#6a6a6a;letter-spacing:-0.380px;">12.11.2020 14:04</span>
<span class="t" style="left:718.50px;top:349.00px;font-size:11.75px;color:#6a6a6a;letter-spacing:0.137px;">BMP-Datei</span>
<span class="t" style="left:858.30px;top:349.00px;font-size:11.75px;color:#6a6a6a;letter-spacing:-0.117px;">8'713 KB</span>
<svg class="r" style="left:341px;top:369px" width="12" height="16" viewBox="0 0 12 16"><path d="M0.5 0.5h8l3 3v12h-11z" fill="#fff" stroke="#8a8a8a"/><path d="M8.5 0.5v3h3" fill="none" stroke="#8a8a8a"/><rect x="3" y="5" width="6" height="6" fill="#1e73be"/><path d="M3 11l2-3 2 2 1-1 1 2z" fill="#0b3f7a"/><rect x="6.5" y="6" width="1.5" height="1.5" fill="#cfe6fb"/></svg>
<span class="t" style="left:359.00px;top:370.00px;font-size:11.75px;color:#000;letter-spacing:0.254px;">~fdib50745.bmp</span>
<span class="t" style="left:598.50px;top:370.00px;font-size:11.75px;color:#6a6a6a;letter-spacing:-0.380px;">12.11.2020 14:04</span>
<span class="t" style="left:718.50px;top:370.00px;font-size:11.75px;color:#6a6a6a;letter-spacing:0.137px;">BMP-Datei</span>
<span class="t" style="left:874.00px;top:370.00px;font-size:11.75px;color:#6a6a6a;letter-spacing:-0.302px;">47 KB</span>
<svg class="r" style="left:341px;top:390px" width="12" height="16" viewBox="0 0 12 16"><path d="M0.5 0.5h8l3 3v12h-11z" fill="#fff" stroke="#8a8a8a"/><path d="M8.5 0.5v3h3" fill="none" stroke="#8a8a8a"/><rect x="3" y="5" width="6" height="6" fill="#1e73be"/><path d="M3 11l2-3 2 2 1-1 1 2z" fill="#0b3f7a"/><rect x="6.5" y="6" width="1.5" height="1.5" fill="#cfe6fb"/></svg>
<span class="t" style="left:359.00px;top:391.00px;font-size:11.75px;color:#000;letter-spacing:0.254px;">~fdib50750.bmp</span>
<span class="t" style="left:598.50px;top:391.00px;font-size:11.75px;color:#6a6a6a;letter-spacing:-0.380px;">12.11.2020 14:04</span>
<span class="t" style="left:718.50px;top:391.00px;font-size:11.75px;color:#6a6a6a;letter-spacing:0.137px;">BMP-Datei</span>
<span class="t" style="left:858.30px;top:391.00px;font-size:11.75px;color:#6a6a6a;letter-spacing:-0.117px;">1'025 KB</span>
<svg class="r" style="left:341px;top:411px" width="12" height="16" viewBox="0 0 12 16"><path d="M0.5 0.5h8l3 3v12h-11z" fill="#fff" stroke="#8a8a8a"/><path d="M8.5 0.5v3h3" fill="none" stroke="#8a8a8a"/><rect x="3" y="5" width="6" height="6" fill="#1e73be"/><path d="M3 11l2-3 2 2 1-1 1 2z" fill="#0b3f7a"/><rect x="6.5" y="6" width="1.5" height="1.5" fill="#cfe6fb"/></svg>
<span class="t" style="left:359.00px;top:412.00px;font-size:11.75px;color:#000;letter-spacing:0.254px;">~fdib50755.bmp</span>
<span class="t" style="left:598.50px;top:412.00px;font-size:11.75px;color:#6a6a6a;letter-spacing:-0.380px;">12.11.2020 14:04</span>
<span class="t" style="left:718.50px;top:412.00px;font-size:11.75px;color:#6a6a6a;letter-spacing:0.137px;">BMP-Datei</span>
<span class="t" style="left:858.30px;top:412.00px;font-size:11.75px;color:#6a6a6a;letter-spacing:-0.117px;">1'025 KB</span>
<svg class="r" style="left:341px;top:432px" width="12" height="16" viewBox="0 0 12 16"><path d="M0.5 0.5h8l3 3v12h-11z" fill="#fff" stroke="#8a8a8a"/><path d="M8.5 0.5v3h3" fill="none" stroke="#8a8a8a"/><rect x="3" y="5" width="6" height="6" fill="#1e73be"/><path d="M3 11l2-3 2 2 1-1 1 2z" fill="#0b3f7a"/><rect x="6.5" y="6" width="1.5" height="1.5" fill="#cfe6fb"/></svg>
<span class="t" style="left:359.00px;top:433.00px;font-size:11.75px;color:#000;letter-spacing:0.254px;">~fdib50760.bmp</span>
<span class="t" style="left:598.50px;top:433.00px;font-size:11.75px;color:#6a6a6a;letter-spacing:-0.380px;">12.11.2020 14:04</span>
<span class="t" style="left:718.50px;top:433.00px;font-size:11.75px;color:#6a6a6a;letter-spacing:0.137px;">BMP-Datei</span>
<span class="t" style="left:858.30px;top:433.00px;font-size:11.75px;color:#6a6a6a;letter-spacing:-0.117px;">1'025 KB</span>
<svg class="r" style="left:341px;top:453px" width="12" height="16" viewBox="0 0 12 16"><path d="M0.5 0.5h8l3 3v12h-11z" fill="#fff" stroke="#8a8a8a"/><path d="M8.5 0.5v3h3" fill="none" stroke="#8a8a8a"/><rect x="3" y="5" width="6" height="6" fill="#1e73be"/><path d="M3 11l2-3 2 2 1-1 1 2z" fill="#0b3f7a"/><rect x="6.5" y="6" width="1.5" height="1.5" fill="#cfe6fb"/></svg>
<span class="t" style="left:359.00px;top:454.00px;font-size:11.75px;color:#000;letter-spacing:0.254px;">~fdib50765.bmp</span>
<span class="t" style="left:598.50px;top:454.00px;font-size:11.75px;color:#6a6a6a;letter-spacing:-0.380px;">12.11.2020 14:04</span>
<span class="t" style="left:718.50px;top:454.00px;font-size:11.75px;color:#6a6a6a;letter-spacing:0.137px;">BMP-Datei</span>
<span class="t" style="left:858.30px;top:454.00px;font-size:11.75px;color:#6a6a6a;letter-spacing:-0.117px;">1'025 KB</span>
<svg class="r" style="left:341px;top:474px" width="12" height="16" viewBox="0 0 12 16"><path d="M0.5 0.5h8l3 3v12h-11z" fill="#fff" stroke="#8a8a8a"/><path d="M8.5 0.5v3h3" fill="none" stroke="#8a8a8a"/><rect x="3" y="5" width="6" height="6" fill="#1e73be"/><path d="M3 11l2-3 2 2 1-1 1 2z" fill="#0b3f7a"/><rect x="6.5" y="6" width="1.5" height="1.5" fill="#cfe6fb"/></svg>
<span class="t" style="left:359.00px;top:475.00px;font-size:11.75px;color:#000;letter-spacing:0.254px;">~fdib50770.bmp</span>
<span class="t" style="left:598.50px;top:475.00px;font-size:11.75px;color:#6a6a6a;letter-spacing:-0.380px;">12.11.2020 14:04</span>
<span class="t" style="left:718.50px;top:475.00px;font-size:11.75px;color:#6a6a6a;letter-spacing:0.137px;">BMP-Datei</span>
<span class="t" style="left:858.30px;top:475.00px;font-size:11.75px;color:#6a6a6a;letter-spacing:-0.117px;">1'025 KB</span>
<svg class="r" style="left:341px;top:495px" width="12" height="16" viewBox="0 0 12 16"><path d="M0.5 0.5h8l3 3v12h-11z" fill="#fff" stroke="#8a8a8a"/><path d="M8.5 0.5v3h3" fill="none" stroke="#8a8a8a"/><rect x="3" y="5" width="6" height="6" fill="#1e73be"/><path d="M3 11l2-3 2 2 1-1 1 2z" fill="#0b3f7a"/><rect x="6.5" y="6" width="1.5" height="1.5" fill="#cfe6fb"/></svg>
<span class="t" style="left:359.00px;top:496.00px;font-size:11.75px;color:#000;letter-spacing:0.254px;">~fdib50775.bmp</span>
<span class="t" style="left:598.50px;top:496.00px;font-size:11.75px;color:#6a6a6a;letter-spacing:-0.380px;">12.11.2020 14:04</span>
<span class="t" style="left:718.50px;top:496.00px;font-size:11.75px;color:#6a6a6a;letter-spacing:0.137px;">BMP-Datei</span>
<span class="t" style="left:858.30px;top:496.00px;font-size:11.75px;color:#6a6a6a;letter-spacing:-0.117px;">1'025 KB</span>
<svg class="r" style="left:341px;top:516px" width="12" height="16" viewBox="0 0 12 16"><path d="M0.5 0.5h8l3 3v12h-11z" fill="#fff" stroke="#8a8a8a"/><path d="M8.5 0.5v3h3" fill="none" stroke="#8a8a8a"/><rect x="3" y="5" width="6" height="6" fill="#1e73be"/><path d="M3 11l2-3 2 2 1-1 1 2z" fill="#0b3f7a"/><rect x="6.5" y="6" width="1.5" height="1.5" fill="#cfe6fb"/></svg>
<span class="t" style="left:359.00px;top:517.00px;font-size:11.75px;color:#000;letter-spacing:0.254px;">~fdib50780.bmp</span>
<span class="t" style="left:598.50px;top:517.00px;font-size:11.75px;color:#6a6a6a;letter-spacing:-0.380px;">12.11.2020 14:04</span>
<span class="t" style="left:718.50px;top:517.00px;font-size:11.75px;color:#6a6a6a;letter-spacing:0.137px;">BMP-Datei</span>
<span class="t" style="left:858.30px;top:517.00px;font-size:11.75px;color:#6a6a6a;letter-spacing:-0.117px;">1'025 KB</span>
<svg class="r" style="left:341px;top:537px" width="12" height="16" viewBox="0 0 12 16"><path d="M0.5 0.5h8l3 3v12h-11z" fill="#fff" stroke="#8a8a8a"/><path d="M8.5 0.5v3h3" fill="none" stroke="#8a8a8a"/><rect x="3" y="5" width="6" height="6" fill="#1e73be"/><path d="M3 11l2-3 2 2 1-1 1 2z" fill="#0b3f7a"/><rect x="6.5" y="6" width="1.5" height="1.5" fill="#cfe6fb"/></svg>
<span class="t" style="left:359.00px;top:538.00px;font-size:11.75px;color:#000;letter-spacing:0.254px;">~fdib50785.bmp</span>
<span class="t" style="left:598.50px;top:538.00px;font-size:11.75px;color:#6a6a6a;letter-spacing:-0.380px;">12.11.2020 14:04</span>
<span class="t" style="left:718.50px;top:538.00px;font-size:11.75px;color:#6a6a6a;letter-spacing:0.137px;">BMP-Datei</span>
<span class="t" style="left:858.30px;top:538.00px;font-size:11.75px;color:#6a6a6a;letter-spacing:-0.117px;">1'025 KB</span>
<svg class="r" style="left:341px;top:558px" width="12" height="16" viewBox="0 0 12 16"><path d="M0.5 0.5h8l3 3v12h-11z" fill="#fff" stroke="#8a8a8a"/><path d="M8.5 0.5v3h3" fill="none" stroke="#8a8a8a"/><rect x="3" y="5" width="6" height="6" fill="#1e73be"/><path d="M3 11l2-3 2 2 1-1 1 2z" fill="#0b3f7a"/><rect x="6.5" y="6" width="1.5" height="1.5" fill="#cfe6fb"/></svg>
<span class="t" style="left:359.00px;top:559.00px;font-size:11.75px;color:#000;letter-spacing:0.254px;">~fdib50790.bmp</span>
<span class="t" style="left:598.50px;top:559.00px;font-size:11.75px;color:#6a6a6a;letter-spacing:-0.380px;">12.11.2020 14:04</span>
<span class="t" style="left:718.50px;top:559.00px;font-size:11.75px;color:#6a6a6a;letter-spacing:0.137px;">BMP-Datei</span>
<span class="t" style="left:858.30px;top:559.00px;font-size:11.75px;color:#6a6a6a;letter-spacing:-0.117px;">1'025 KB</span>
<svg class="r" style="left:341px;top:579px" width="12" height="16" viewBox="0 0 12 16"><path d="M0.5 0.5h8l3 3v12h-11z" fill="#fff" stroke="#8a8a8a"/><path d="M8.5 0.5v3h3" fill="none" stroke="#8a8a8a"/><rect x="3" y="5" width="6" height="6" fill="#1e73be"/><path d="M3 11l2-3 2 2 1-1 1 2z" fill="#0b3f7a"/><rect x="6.5" y="6" width="1.5" height="1.5" fill="#cfe6fb"/></svg>
<span class="t" style="left:359.00px;top:580.00px;font-size:11.75px;color:#000;letter-spacing:0.254px;">~fdib50795.bmp</span>
<span class="t" style="left:598.50px;top:580.00px;font-size:11.75px;color:#6a6a6a;letter-spacing:-0.380px;">12.11.2020 14:04</span>
<span class="t" style="left:718.50px;top:580.00px;font-size:11.75px;color:#6a6a6a;letter-spacing:0.137px;">BMP-Datei</span>
<span class="t" style="left:858.30px;top:580.00px;font-size:11.75px;color:#6a6a6a;letter-spacing:-0.117px;">1'025 KB</span>
<div class="r" style="left:930px;top:188px;width:19px;height:410px;background:#fff;"></div>
<div class="r" style="left:932px;top:189px;width:16px;height:408.5px;background:#f0f0f0;"></div>
<svg class="r" style="left:934.5px;top:194px" width="10" height="8" viewBox="0 0 10 8"><path d="M1.600 6.300l3.400-3.400 3.400 3.400" stroke="#505050" stroke-width="2" fill="none"/></svg>
<svg class="r" style="left:934.5px;top:586px" width="10" height="8" viewBox="0 0 10 8"><path d="M1.600 1.700l3.400 3.400 3.400-3.400" stroke="#505050" stroke-width="2" fill="none"/></svg>
<div class="r" style="left:932px;top:206px;width:15.3px;height:309.7px;background:#cdcdcd;"></div>
<div class="r" style="left:0px;top:598px;width:949px;height:24px;background:#fff;"></div>
<span class="t" style="left:14.80px;top:601.50px;font-size:11.75px;color:#1e395b;letter-spacing:-0.157px;">22 Elemente</span>
<div class="r" style="left:89.5px;top:602px;width:1px;height:15px;background:#ececec;"></div>
<span class="t" style="left:99.80px;top:601.50px;font-size:11.75px;color:#1e395b;letter-spacing:-0.088px;">1 Element ausgewählt (1.00 MB)</span>
<div class="r" style="left:278px;top:602px;width:1px;height:15px;background:#ececec;"></div>
<div class="r" style="left:900px;top:598px;width:22px;height:22px;background:#cce8ff;border:1px solid #3a96dd;box-sizing:border-box;"></div>
<svg class="r" style="left:904px;top:604px" width="16" height="11" viewBox="0 0 16 11"><g fill="#fff" stroke="#7a9ac8" stroke-width="0.800"><rect x="0.500" y="0.400" width="2.600" height="2.600"/><rect x="0.500" y="4.200" width="2.600" height="2.600"/><rect x="0.500" y="8" width="2.600" height="2.600"/></g><rect x="1.300" y="8.800" width="1" height="1" fill="#e03030"/><path d="M5 1.700h4.500M11 1.700h4.500M5 5.500h4.500M11 5.500h4.500M5 9.300h4.500M11 9.300h4.500" stroke="#666" stroke-width="1.100"/></svg>
<svg class="r" style="left:926px;top:603px" width="14" height="11" viewBox="0 0 14 11"><rect x="0.500" y="0.500" width="13" height="10" fill="#fff" stroke="#8a8a8a"/><rect x="2" y="2" width="10" height="7" fill="#5aa8e8"/><path d="M2 9v-2.500l3-1.500 3 1.500 4-2v4.500z" fill="#2a5a4a"/><path d="M2 9v-1l4-1 6 1v1z" fill="#1a3f70"/></svg>
<svg class="r" style="left:300px;top:150px" width="440" height="110" viewBox="0 0 440 110"><ellipse shape-rendering="crispEdges" cx="113.800" cy="79.500" rx="99.200" ry="20.100" fill="none" stroke="#ed1c24" stroke-width="5"/><ellipse shape-rendering="crispEdges" cx="346.800" cy="49.300" rx="69.700" ry="36.600" fill="none" stroke="#ed1c24" stroke-width="5.600"/></svg>
</body></html>
